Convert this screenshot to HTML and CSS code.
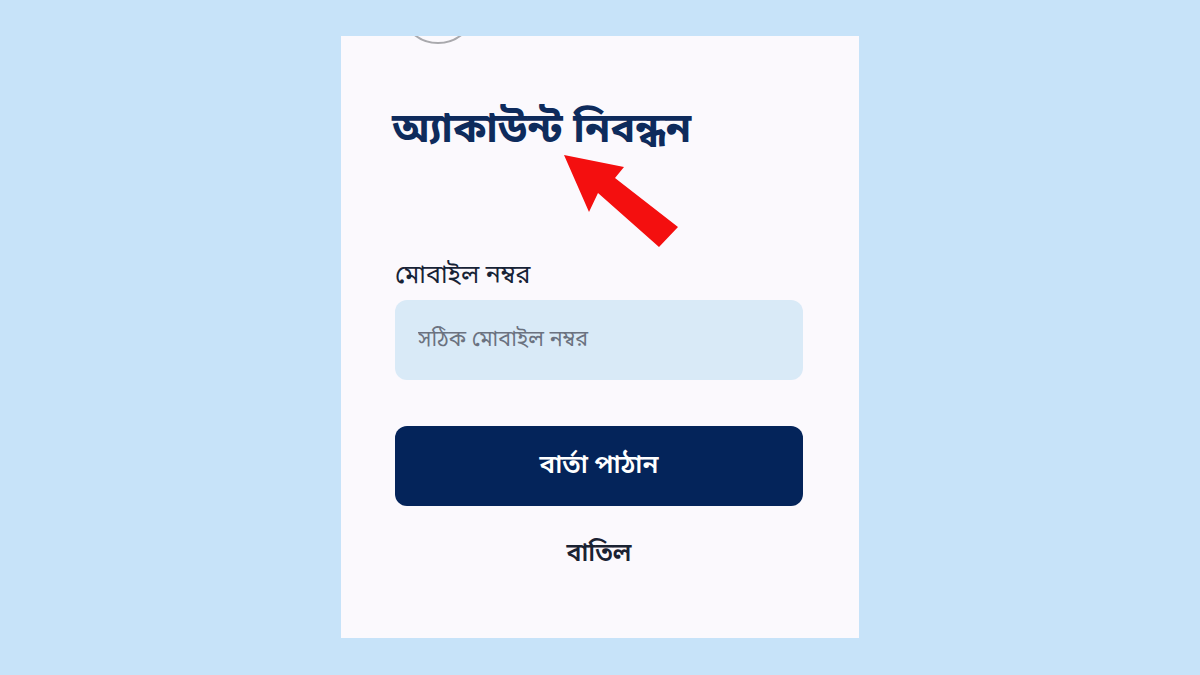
FILE: index.html
```html
<!DOCTYPE html>
<html lang="bn">
<head>
<meta charset="utf-8">
<title>অ্যাকাউন্ট নিবন্ধন</title>
<link rel="stylesheet" href="styles.css">
</head>
<body>
<main class="stage">
  <section class="card">
    <div class="avatar"></div>
    <h1 class="title">অ্যাকাউন্ট নিবন্ধন</h1>
    <svg class="pointer" width="130" height="110" viewBox="0 0 130 110" aria-hidden="true">
      <polygon points="3,5 63,17 54,28 117,77 98,97 37,43 28,62" fill="#f40f0f"/>
    </svg>
    <form class="form">
      <label class="label" for="phone">মোবাইল নম্বর</label>
      <input class="field" id="phone" type="tel" placeholder="সঠিক মোবাইল নম্বর">
      <button class="submit" type="button">বার্তা পাঠান</button>
      <a class="cancel" href="#">বাতিল</a>
    </form>
  </section>
</main>
</body>
</html>
```
FILE: styles.css
```css
* { box-sizing: border-box; }
html, body { margin: 0; height: 100%; }
body {
  background: #c7e3f9;
  font-family: "Noto Sans Bengali", "Noto Sans", "Lohit Bengali", sans-serif;
  overflow: hidden;
}
.stage {
  display: flex;
  justify-content: center;
  padding-top: 36px;
}
.card {
  position: relative;
  width: 518px;
  height: 602px;
  background: #fbf9fd;
  padding: 0 56px 0 54px;
  overflow: hidden;
}
.avatar {
  position: absolute;
  left: 58px;
  top: -70px;
  width: 78px;
  height: 78px;
  border-radius: 50%;
  border: 2px solid #a9a9ad;
  background: #fbf9fd;
}
.title {
  margin: 66px 0 0 -3px;
  font-size: 41px;
  font-weight: 700;
  line-height: 60px;
  color: #0e2b5c;
  white-space: nowrap;
}
.pointer {
  position: absolute;
  left: 220px;
  top: 114px;
}
.form {
  display: flex;
  flex-direction: column;
  margin-top: 98px;
}
.label {
  font-size: 25px;
  line-height: 34px;
  color: #172336;
}
.field {
  margin-top: 6px;
  height: 80px;
  border: none;
  border-radius: 12px;
  background: #d9eaf7;
  padding: 0 23px;
  font: inherit;
  font-size: 21.5px;
  color: #333;
  outline: none;
}
.field::placeholder { color: #6b7280; }
.submit {
  margin-top: 46px;
  height: 80px;
  border: none;
  border-radius: 12px;
  background: #04245a;
  color: #fff;
  font: inherit;
  font-size: 26px;
  font-weight: 600;
}
.cancel {
  margin-top: 32px;
  align-self: center;
  font-size: 25px;
  font-weight: 600;
  color: #1a2232;
  text-decoration: none;
}
```
